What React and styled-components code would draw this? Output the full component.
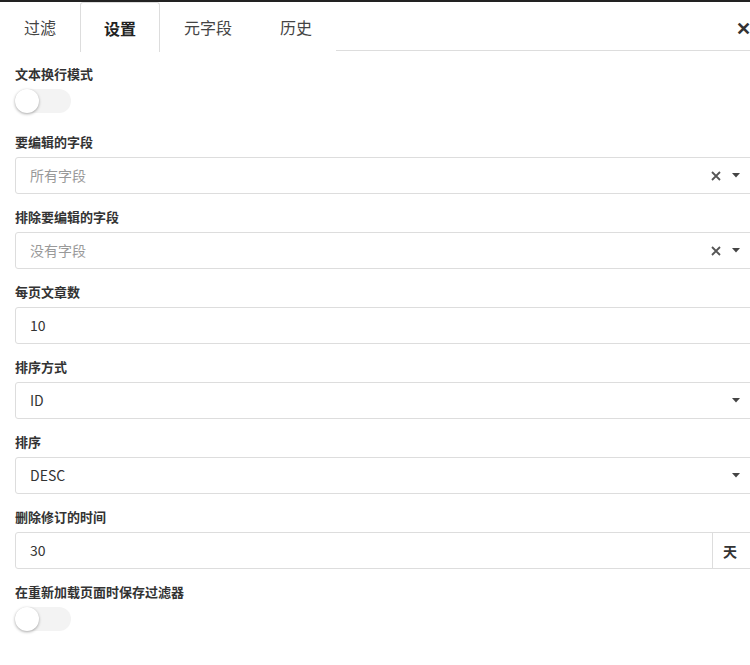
import React from "react";
import styled, { createGlobalStyle } from "styled-components";

const G = createGlobalStyle`
  body { margin: 0; overflow: hidden; background: #fff; font-family: "Noto Sans CJK SC", "Noto Sans", sans-serif; color: #333; }
`;
const Page = styled.div`width: 770px; border-top: 2px solid #222;`;
const Tabs = styled.div`display: flex; height: 48px; border-bottom: 1px solid #ddd; position: relative;`;
const Tab = styled.div`
  padding: 0 23px; display: flex; align-items: center; font-size: 16px; line-height: 1;
  font-weight: ${p => p.active ? 700 : 400}; color: ${p => p.active ? "#222" : "#444"};
  border: 1px solid ${p => p.active ? "#ddd" : "transparent"}; border-bottom: none;
  border-radius: 3px 3px 0 0; background: #fff; margin-bottom: -1px; ${p => p.active ? "height: 49px;" : ""}
`;
const Close = styled.div`position: absolute; left: 736px; top: 12px; font-size: 18px; font-weight: 700; color: #333;`;
const Body = styled.div`padding: 14px 0 0 15px;`;
const Label = styled.div`font-size: 13px; font-weight: 700; line-height: 18px; color: #333; margin-bottom: 6px;`;
const Group = styled.div`margin-bottom: ${p => p.toggle ? 20 : 14}px;`;
const Toggle = styled.div`
  width: 56px; height: 24px; border-radius: 12px; background: #f3f3f3; position: relative;
  &::after { content: ""; position: absolute; left: 0; top: 0; width: 24px; height: 24px; border-radius: 50%;
    background: #fff; box-shadow: 0 1px 3px rgba(0,0,0,.35); }
`;
const Box = styled.div`
  height: 35px; border: 1px solid #ddd; border-radius: 3px; display: flex; align-items: center;
  font-size: 14px; width: 743px; box-sizing: content-box;
`;
const Value = styled.div`flex: 1; padding-left: 14px; line-height: 1; margin-top: -2px; color: ${p => p.ph ? "#999" : "#333"};`;
const Icons = styled.div`display: flex; align-items: center; gap: 11px; margin-right: 19px; color: #555;`;
const Addon = styled.div`width: 36px; height: 35px; border-left: 1px solid #ddd; display: flex; align-items: center; padding-left: 10px; font-weight: 700; font-size: 14px; color: #333;`;

const X = () => (<svg width="10" height="10" viewBox="0 0 10 10"><path d="M1 1L9 9M9 1L1 9" stroke="#555" strokeWidth="1.8"/></svg>);
const Caret = () => (<svg width="8" height="5" viewBox="0 0 8 5"><path d="M0 0H8L4 4.5Z" fill="#444"/></svg>);

export default function App() {
  return (<Page><G/>
    <Tabs>
      <Tab>过滤</Tab><Tab active>设置</Tab><Tab>元字段</Tab><Tab>历史</Tab>
      <Close>✕</Close>
    </Tabs>
    <Body>
      <Group toggle><Label>文本换行模式</Label><Toggle/></Group>
      <Group><Label>要编辑的字段</Label><Box><Value ph>所有字段</Value><Icons><X/><Caret/></Icons></Box></Group>
      <Group><Label>排除要编辑的字段</Label><Box><Value ph>没有字段</Value><Icons><X/><Caret/></Icons></Box></Group>
      <Group><Label>每页文章数</Label><Box><Value>10</Value></Box></Group>
      <Group><Label>排序方式</Label><Box><Value>ID</Value><Icons><Caret/></Icons></Box></Group>
      <Group><Label>排序</Label><Box><Value>DESC</Value><Icons><Caret/></Icons></Box></Group>
      <Group><Label>删除修订的时间</Label><Box><Value>30</Value><Addon>天</Addon></Box></Group>
      <Group toggle><Label>在重新加载页面时保存过滤器</Label><Toggle/></Group>
    </Body>
  </Page>);
}
